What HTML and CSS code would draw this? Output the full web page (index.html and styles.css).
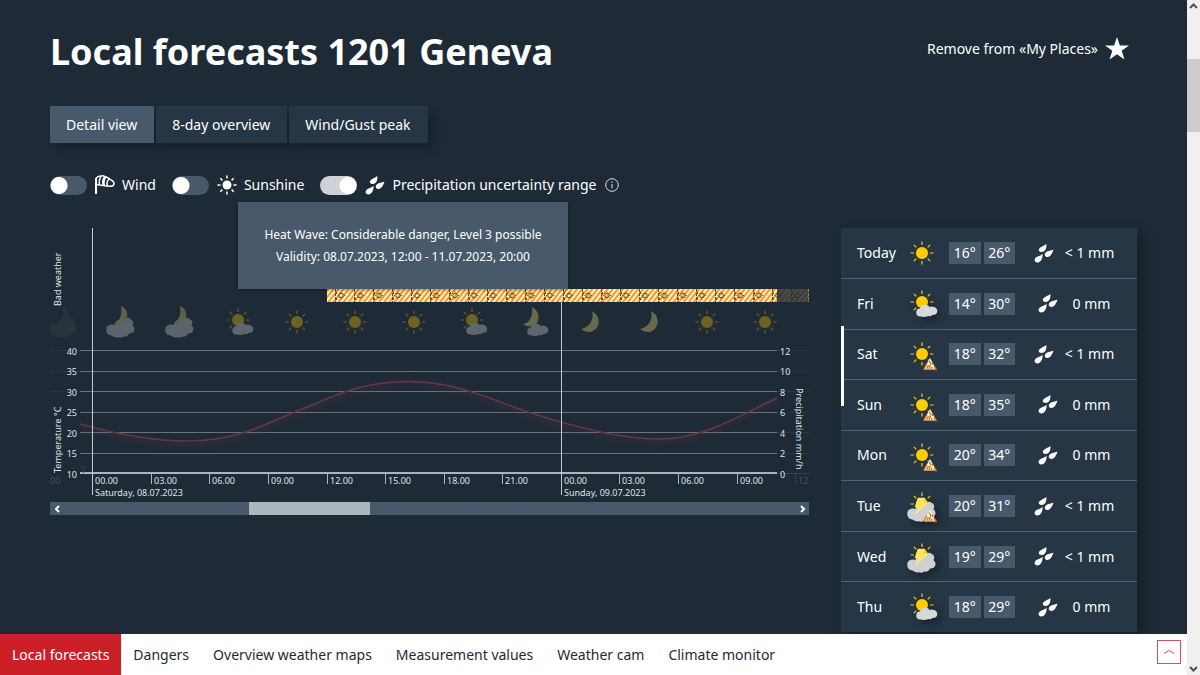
FILE: index.html
```html
<!DOCTYPE html>
<html lang="en">
<head>
<meta charset="utf-8">
<meta name="viewport" content="width=device-width, initial-scale=1">
<title>Local forecasts 1201 Geneva</title>
<link rel="stylesheet" href="styles.css">
</head>
<body>
<svg class="defs" width="0" height="0" aria-hidden="true">
  <defs>
    <symbol id="sun" viewBox="-15 -15 30 30" overflow="visible">
      <circle r="6" fill="#fc0"/>
      <path d="M0-8V-11.5M0 8V11.5M-8 0H-11.5M8 0H11.5M-5.7-5.7L-8.2-8.2M5.7-5.7L8.2-8.2M-5.7 5.7L-8.2 8.2M5.7 5.7L8.2 8.2" stroke="#fc0" stroke-width="1.2"/>
    </symbol>
    <symbol id="small-cloud" viewBox="-15 -15 30 30" overflow="visible">
      <path d="M-1.500 12.500a4 4 0 0 1-.5-8q1-4 5.500-3.700 3 0 4 2.200 1.500-1 3.500-.3 4.300.8 4.300 4.300 0 4-5 4-1.500 1.700-4 1-3.500 1.600-7.800.5z" fill="#d8d8d8"/>
    </symbol>
    <symbol id="big-cloud" viewBox="-15 -15 30 30" overflow="visible">
      <path d="M-8.500 11.500a5.500 5.500 0 0 1-1.500-10.700q3-.8 4.500.2 1.500-6 6-4.500 2-2.500 5-1.500 3.500-3 6 1 3 1 1 5 3 3 1.500 6-1.500 3-5 2.500-2 4-6 3-2 2-5 .8-3 .7-6.500-1.800z" fill="#d0d0d0"/>
    </symbol>
    <symbol id="sun-cloud" viewBox="-15 -15 30 30" overflow="visible">
      <use href="#sun" x="-15" y="-17" width="30" height="30"/>
      <use href="#small-cloud" x="-15" y="-15" width="30" height="30"/>
    </symbol>
    <symbol id="moon" viewBox="-15 -15 30 30" overflow="visible">
      <path d="M2-10.500C11-7 11 6 2 9.500-2 11-7 9-9 7 1 5 4-4 2-10.500z" fill="#f0dc78"/>
    </symbol>
    <symbol id="moon-cloud" viewBox="-15 -15 30 30" overflow="visible">
      <path d="M-3-15C4-12 6-2 0 3-3 5-9 5-12 2-4 1-2-8-3-15z" fill="#f0dc78"/>
      <use href="#small-cloud" x="-17" y="-14" width="30" height="30"/>
    </symbol>
    <symbol id="cloud-moon" viewBox="-15 -15 30 30" overflow="visible">
      <use href="#big-cloud" x="-16" y="-13" width="30" height="30"/>
      <path d="M0-16C8-13 8-3 2 1-1 3-4 3-6 1 0-2 1-9 0-16z" fill="#d8c880"/>
    </symbol>
    <symbol id="storm" viewBox="-15 -15 30 30" overflow="visible">
      <use href="#sun" x="-15" y="-17" width="30" height="30"/>
      <use href="#big-cloud" x="-16" y="-13" width="30" height="30"/>
      <path d="M-4-8H3L1-3H5L-6 8-3 1H-7z" fill="#ffe555" stroke="#fff3a0" stroke-width=".5"/>
    </symbol>
    <pattern id="stripe" width="4" height="4" patternUnits="userSpaceOnUse" patternTransform="rotate(38)">
      <rect width="4" height="4" fill="#fff1d2"/><rect width="2" height="4" fill="#f09b20"/>
    </pattern>
    <symbol id="warn" viewBox="0 0 14 12" overflow="visible">
      <path d="M7 0L13.500 11.500H.5z" fill="#fff"/>
      <path d="M4 5.500L1 11M6 2.500L8 6M5.500 7L3.500 11M7.500 6.500L6 11M9 4.500L10 7M9 9L8.500 11M11 8L13 11.500H10.500" stroke="#d97a0c" stroke-width="1.500" fill="none"/>
    </symbol>
    <symbol id="drops" viewBox="0 0 20 19">
      <g fill="currentColor">
        <path d="M12.300 0C13 4 11 8.300 7.500 8 4.500 7.700 4 5.500 6 3.800 7.500 2.500 10 1.800 12.300 0z"/>
        <path d="M19.500 5.500C18.500 9 16.500 13.300 13 13 10.500 12.700 10 10 12 8.300 14 6.500 17 7 19.500 5.500z"/>
        <path d="M8.500 9.800C9 13 7.200 18.500 3.500 18.500 0 18.300 0 15 1.800 13.500 4 12 7 12 8.500 9.800z"/>
      </g>
    </symbol>
  </defs>
</svg>

<div class="shell">
  <div class="page">
    <main class="main">
      <header class="top">
        <h1 class="title">Local forecasts 1201 Geneva</h1>
        <button class="fav" type="button">Remove from «My Places»
          <svg width="24" height="23" viewBox="0 0 24 23" aria-hidden="true"><path d="M12 0l2.900 8.500H24l-7.300 5.300L19.400 22.500 12 17.200 4.600 22.500 7.300 13.800 0 8.500h9.100z" fill="#fff"/></svg>
        </button>
      </header>

      <nav class="tabs" aria-label="Forecast views">
        <button class="tab tab-active" type="button">Detail view</button>
        <button class="tab" type="button">8-day overview</button>
        <button class="tab" type="button">Wind/Gust peak</button>
      </nav>

      <div class="options">
        <label class="option"><input class="switch" type="checkbox">
          <svg width="20" height="20" viewBox="0 0 20 20" fill="none" stroke="#fff" aria-hidden="true"><path d="M1 3V19" stroke-width="2"/><path d="M1 4Q2 1 6 1C9 0 13 3 17 5.500 20 7 19.500 11 16 11.300 11 11.500 6 10 1 9.500M6 1.300Q3.500 5 4.500 9.500M9.500 2Q6.500 6 8.500 10.300M10.500 2.500Q8 6 9.500 10.500M14 4Q11 7 12.500 11" stroke-width="1.500"/></svg>
          Wind</label>
        <label class="option"><input class="switch" type="checkbox">
          <svg width="20" height="20" viewBox="-10 -10 20 20" stroke="#fff" stroke-width="1.500" aria-hidden="true"><circle r="4.500" fill="#fff" stroke="none"/><path d="M0-6.500V-9.500M0 6.500V9.500M-6.500 0H-9.500M6.500 0H9.500M-4.600-4.600L-6.700-6.700M4.600-4.600L6.700-6.700M-4.600 4.600L-6.700 6.700M4.600 4.600L6.700 6.700"/></svg>
          Sunshine</label>
        <label class="option"><input class="switch" type="checkbox" checked>
          <svg width="20" height="19" aria-hidden="true"><use href="#drops"/></svg>
          Precipitation uncertainty range</label>
        <button class="info" type="button" aria-label="Information">
          <svg width="14" height="14" viewBox="0 0 14 14" fill="none" stroke="#dfe4e8" aria-hidden="true"><circle cx="7" cy="7" r="6.300"/><path d="M7 6V10.500M7 3.300V4.800"/></svg>
        </button>
      </div>

      <div class="content">
        <section class="chart" aria-label="Forecast chart">
          <svg class="plot" viewBox="0 0 759 274">
            <defs>
              <pattern id="heat" x="285" y="61" width="19" height="13" patternUnits="userSpaceOnUse">
                <g fill="none" stroke="#6a4a1c"><path d="M.5 0V13" stroke-dasharray="3 1" stroke-width="1"/><path d="M1.500 3V5M1.500 9V11"/><circle cx="6" cy="6.500" r="2.200"/><path d="M6 2.500V3.500M6 9.500V10.500M2.500 6.500H3M9 6.500H10M3.500 4L4 4.500M8.500 4L8 4.500M3.500 9L4 8.500M8.500 9L8 8.500"/></g>
              </pattern>
              <filter id="soft" x="-5%" y="-20%" width="110%" height="140%"><feGaussianBlur stdDeviation="2"/></filter>
            </defs>
            <path d="M30 122.500H727M30 143.500H727M30 163.500H727M30 184.500H727M30 204.500H727M30 225.500H727" stroke="#66737e"/>
            <path d="M0 122.500H30M0 143.500H30M0 163.500H30M727 122.500H759M727 143.500H759M727 163.500H759M727 184.500H759M727 204.500H759M727 225.500H759" stroke="#293641"/>
            <path d="M30 245H727" stroke="#a9b4bf" stroke-width="2"/>
            <path d="M727 245.500H759M745.500 245V256" stroke="#35434f"/>
            <path d="M30 239H37M33.500 239V245" stroke="#2b4560"/>
            <path id="temp" d="M30 196C55 203 95 213 138 213 195 213 225 190 265 176 300 160 325 153.500 360 153.500 415 153.500 455 180 511 194 545 203 575 211 610 211 655 211 690 187 727 170" fill="none" stroke="#653848" stroke-width="1.500"/>
            <path d="M30 200C55 205 95 217 138 217 195 215 225 193 265 179 300 163 325 156 360 155 415 155 455 184 511 198 545 207 575 213 610 213 655 213 690 189 727 172" fill="none" stroke="#653848" stroke-width="7" opacity=".15" filter="url(#soft)"/>
            <path d="M101.500 245V256M159.500 245V256M218.500 245V256M277.500 245V256M335.500 245V256M394.500 245V256M452.500 245V256M569.500 245V256M628.500 245V256M687.500 245V256" stroke="#a9b4bf"/>
            <g opacity=".35">
              <use href="#cloud-moon" x="56" y="79" width="30" height="30"/>
              <use href="#cloud-moon" x="115" y="79" width="30" height="30"/>
              <use href="#sun-cloud" x="173" y="79" width="30" height="30"/>
              <use href="#sun" x="232" y="79" width="30" height="30"/>
              <use href="#sun" x="290" y="79" width="30" height="30"/>
              <use href="#sun" x="349" y="79" width="30" height="30"/>
              <use href="#sun-cloud" x="407" y="79" width="30" height="30"/>
              <use href="#moon-cloud" x="470" y="79" width="30" height="30"/>
              <use href="#moon" x="525" y="79" width="30" height="30"/>
              <use href="#moon" x="584" y="79" width="30" height="30"/>
              <use href="#sun" x="642" y="79" width="30" height="30"/>
              <use href="#sun" x="700" y="79" width="30" height="30"/>
            </g>
            <use href="#cloud-moon" x="-2" y="79" width="30" height="30" opacity=".05"/>
            <path d="M42.500 0V267" stroke="#c5ccd3"/>
            <path d="M511.500 74V267" stroke="#c5ccd3"/>
            <rect x="277" y="61" width="450" height="13" fill="url(#stripe)"/>
            <rect x="285" y="61" width="442" height="13" fill="url(#heat)"/>
            <g opacity=".18"><rect x="727" y="61" width="32" height="13" fill="url(#stripe)"/><rect x="727" y="61" width="32" height="13" fill="url(#heat)"/></g>
            <path d="M758.500 61V74" stroke="#a08030" stroke-dasharray="3 1"/>
            <g class="ticks" text-anchor="end">
              <text x="27" y="127">40</text><text x="27" y="147">35</text><text x="27" y="168">30</text><text x="27" y="188">25</text><text x="27" y="209">20</text><text x="27" y="229">15</text><text x="27" y="250">10</text>
            </g>
            <g class="ticks">
              <text x="730" y="127">12</text><text x="730" y="147">10</text><text x="730" y="168">8</text><text x="730" y="188">6</text><text x="730" y="209">4</text><text x="730" y="229">2</text><text x="730" y="250">0</text>
              <text x="45" y="256">00.00</text><text x="104" y="256">03.00</text><text x="162" y="256">06.00</text><text x="221" y="256">09.00</text><text x="280" y="256">12.00</text><text x="338" y="256">15.00</text><text x="397" y="256">18.00</text><text x="455" y="256">21.00</text><text x="514" y="256">00.00</text><text x="572" y="256">03.00</text><text x="631" y="256">06.00</text><text x="690" y="256">09.00</text>
              <text x="45" y="268">Saturday, 08.07.2023</text><text x="514" y="268">Sunday, 09.07.2023</text>
              <text class="faint" x="0" y="256">00</text><text class="faint" x="748" y="256">12</text>
              <text transform="translate(11 78) rotate(-90)">Bad weather</text>
              <text transform="translate(11 245) rotate(-90)">Temperature °C</text>
              <text transform="translate(746 160) rotate(90)">Precipitation mm/h</text>
            </g>
          </svg>
          <div class="hscroll">
            <button class="arrow" type="button" aria-label="Scroll left"><svg width="6" height="8" viewBox="0 0 6 8"><path d="M5 1L2 4 5 7" fill="none" stroke="#fff" stroke-width="2"/></svg></button>
            <div class="thumb"></div>
            <button class="arrow" type="button" aria-label="Scroll right"><svg width="6" height="8" viewBox="0 0 6 8"><path d="M1 1L4 4 1 7" fill="none" stroke="#fff" stroke-width="2"/></svg></button>
          </div>
          <div class="tooltip" role="tooltip">Heat Wave: Considerable danger, Level 3 possible<br>Validity: 08.07.2023, 12:00 - 11.07.2023, 20:00</div>
        </section>

        <ul class="days">
          <li><a class="day" href="#"><span>Today</span><svg width="30" height="30"><use href="#sun"/></svg><span class="temps"><span class="temp">16°</span><span class="temp">26°</span></span><span class="rain"><svg width="20" height="19"><use href="#drops"/></svg>&lt; 1 mm</span></a></li>
          <li><a class="day" href="#"><span>Fri</span><svg class="shade" width="30" height="30"><use href="#sun-cloud"/></svg><span class="temps"><span class="temp">14°</span><span class="temp">30°</span></span><span class="rain rain-none"><svg width="20" height="19"><use href="#drops"/></svg>0 mm</span></a></li>
          <li><a class="day" href="#"><span>Sat</span><svg width="30" height="30"><use href="#sun"/><use href="#warn" x="16" y="19" width="14" height="12"/></svg><span class="temps"><span class="temp">18°</span><span class="temp">32°</span></span><span class="rain"><svg width="20" height="19"><use href="#drops"/></svg>&lt; 1 mm</span></a></li>
          <li><a class="day" href="#"><span>Sun</span><svg width="30" height="30"><use href="#sun"/><use href="#warn" x="16" y="19" width="14" height="12"/></svg><span class="temps"><span class="temp">18°</span><span class="temp">35°</span></span><span class="rain rain-none"><svg width="20" height="19"><use href="#drops"/></svg>0 mm</span></a></li>
          <li><a class="day" href="#"><span>Mon</span><svg width="30" height="30"><use href="#sun"/><use href="#warn" x="16" y="19" width="14" height="12"/></svg><span class="temps"><span class="temp">20°</span><span class="temp">34°</span></span><span class="rain rain-none"><svg width="20" height="19"><use href="#drops"/></svg>0 mm</span></a></li>
          <li><a class="day" href="#"><span>Tue</span><svg class="shade" width="30" height="30"><use href="#storm"/><use href="#warn" x="16" y="19" width="14" height="12"/></svg><span class="temps"><span class="temp">20°</span><span class="temp">31°</span></span><span class="rain"><svg width="20" height="19"><use href="#drops"/></svg>&lt; 1 mm</span></a></li>
          <li><a class="day" href="#"><span>Wed</span><svg class="shade" width="30" height="30"><use href="#storm"/></svg><span class="temps"><span class="temp">19°</span><span class="temp">29°</span></span><span class="rain"><svg width="20" height="19"><use href="#drops"/></svg>&lt; 1 mm</span></a></li>
          <li><a class="day" href="#"><span>Thu</span><svg class="shade" width="30" height="30"><use href="#sun-cloud"/></svg><span class="temps"><span class="temp">18°</span><span class="temp">29°</span></span><span class="rain rain-none"><svg width="20" height="19"><use href="#drops"/></svg>0 mm</span></a></li>
        </ul>
      </div>
    </main>

    <nav class="bottom" aria-label="Sections">
      <a class="link link-active" href="#">Local forecasts</a>
      <a class="link" href="#">Dangers</a>
      <a class="link" href="#">Overview weather maps</a>
      <a class="link" href="#">Measurement values</a>
      <a class="link" href="#">Weather cam</a>
      <a class="link" href="#">Climate monitor</a>
      <button class="to-top" type="button" aria-label="Back to top"><svg width="12" height="6" viewBox="0 0 12 6"><path d="M1 4.500L6 1.500 11 4.500" fill="none" stroke="#d2555c"/></svg></button>
    </nav>
  </div>

  <div class="scrollbar" aria-hidden="true">
    <svg width="9" height="6" viewBox="0 0 9 6"><path d="M1 5L4.500 1.500 8 5" fill="none" stroke="#505050" stroke-width="2"/></svg>
    <div class="scroll-track"><div class="scroll-thumb"></div></div>
    <svg width="9" height="6" viewBox="0 0 9 6"><path d="M1 1L4.500 4.500 8 1" fill="none" stroke="#505050" stroke-width="2"/></svg>
  </div>
</div>
</body>
</html>
```
FILE: styles.css
```css
* { box-sizing: border-box; }
body {
  margin: 0;
  background: #1e2a35;
  color: #fff;
  font: 14px/20px "Noto Sans", "Open Sans", sans-serif;
}
button { font: inherit; color: inherit; border: 0; padding: 0; background: none; cursor: pointer; }
a { color: inherit; text-decoration: none; }
.defs { position: absolute; }

.shell { display: flex; height: 100vh; }
.page { flex: 1; min-width: 0; display: flex; flex-direction: column; }
.main { flex: 1; min-height: 0; display: flex; flex-direction: column; padding: 28px 50px 2px; overflow: hidden; }

.top { display: flex; justify-content: space-between; padding-right: 8px; }
.title { margin: 0; font-size: 36px; line-height: 48px; font-weight: 700; }
.fav { display: flex; align-items: center; gap: 7px; height: 41px; }

.tabs { display: flex; gap: 2px; margin-top: 30px; }
.tab { height: 37px; padding: 0 17px 0 16px; background: #263644; box-shadow: 6px 6px 8px rgba(0, 0, 0, .2); }
.tab-active { background: #47596a; }

.options { display: flex; align-items: center; gap: 16px; height: 20px; margin-top: 32px; }
.option { display: flex; align-items: center; gap: 8px; }
.option svg { margin-right: -1px; }
.switch {
  appearance: none;
  width: 37px;
  height: 19px;
  margin: 0;
  border-radius: 10px;
  background: radial-gradient(circle at 9px 50%, #fff 8px, transparent 9px) #47596a;
}
.switch:checked { background: radial-gradient(circle at 28px 50%, #fff 8px, transparent 9px) #cfd1d8; }
.info { display: flex; margin-left: -7px; }

.content { flex: 1; min-height: 0; display: flex; gap: 32px; margin-top: 33px; }
.chart { flex: 1; min-width: 0; position: relative; }
.plot { display: block; width: 100%; }
.ticks { font-size: 9px; fill: #dfe4e8; }
.faint { fill: #46525d; }
.hscroll { display: flex; align-items: center; height: 13px; background: #47596a; }
.arrow { width: 13px; height: 13px; display: flex; align-items: center; justify-content: center; }
.thumb { width: 16%; height: 13px; margin-left: 24.5%; margin-right: auto; background: #adb5bf; }
.tooltip {
  position: absolute;
  left: 188px;
  top: -26px;
  width: 330px;
  padding: 22px 12px 21px;
  background: #47596a;
  box-shadow: 0 1px 3px rgba(0, 0, 0, .4);
  font-size: 12px;
  line-height: 22px;
  text-align: center;
}

.days {
  position: relative;
  display: grid;
  grid-template-rows: 50px repeat(7, 1fr);
  width: 296px;
  margin: 0;
  padding: 0;
  list-style: none;
  background: #263644;
  box-shadow: 7px 4px 10px rgba(0, 0, 0, .25);
}
.days::before {
  content: "";
  position: absolute;
  left: 0;
  top: 98px;
  width: 3px;
  height: 80px;
  background: #fff;
}
.days li + li { border-top: 1px solid #526474; }
.day {
  height: 100%;
  display: grid;
  grid-template-columns: 50px 30px 78px 1fr;
  align-items: center;
  padding: 0 16px;
}
.day svg { overflow: visible; }
.shade { filter: drop-shadow(4px 4px 4px rgba(0, 0, 0, .35)); }
.temps { display: flex; gap: 3px; padding-left: 12px; }
.temp { flex: 1; height: 22px; line-height: 22px; text-align: center; background: #47596a; }
.rain { display: flex; align-items: center; justify-content: center; gap: 11px; padding-left: 12px; }
.rain-none { gap: 15px; }

.bottom { display: flex; height: 41px; background: #fff; color: #1e2a35; }
.link { padding: 0 12px; line-height: 41px; white-space: nowrap; }
.link-active { background: #cc1f28; color: #fff; }
.to-top {
  display: flex;
  align-items: center;
  justify-content: center;
  width: 24px;
  height: 24px;
  margin: 6px 6px 0 auto;
  border: 1px solid #d2555c;
}

.scrollbar {
  display: flex;
  flex-direction: column;
  align-items: center;
  width: 13px;
  padding: 3px 0;
  background: #f0f0f0;
}
.scroll-track { flex: 1; width: 100%; padding-top: 50px; }
.scroll-thumb { height: 73px; background: #cdcdcd; }
```
